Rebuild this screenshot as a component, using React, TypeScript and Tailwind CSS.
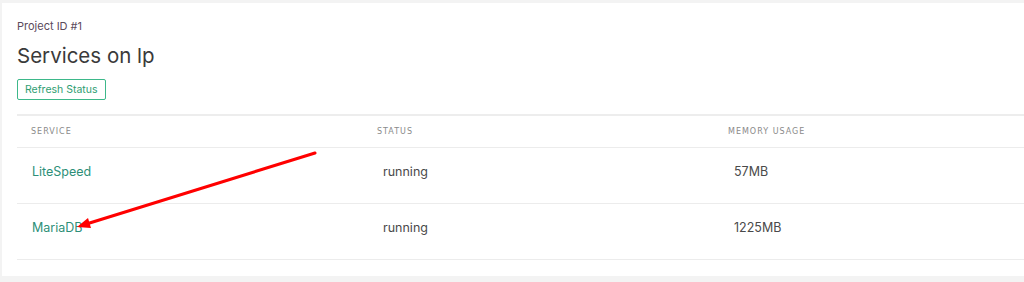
const rows = [
  { name: "LiteSpeed", status: "running", memory: "57MB" },
  { name: "MariaDB", status: "running", memory: "1225MB" },
];

export default function App() {
  return (
    <div className="h-[282px] w-[1024px] overflow-hidden bg-[#f3f3f3] pl-[2px] pt-[3px] font-['Inter',sans-serif]">
      <div className="relative h-[273px] bg-white pl-[15px] pt-[16px]">
        <div className="text-[11px] leading-[14px] text-[#5b4a5b]">Project ID #1</div>
        <h1 className="mt-[9px] text-[20.5px] leading-[28px] text-[#3a3a3a]">Services on lp</h1>
        <button className="mt-[9px] h-[21px] rounded-[2px] border border-[#3db88a] px-[7px] text-[10.5px] leading-[17px] text-[#2f9e72]">
          Refresh Status
        </button>

        <div className="mt-[14px] border-t-2 border-[#ededed]">
          <div className="grid h-[32px] grid-cols-[346px_351px_1fr] items-center border-b border-[#ececec] text-[8px] tracking-[1px] text-[#8a8a8a] uppercase font-['DejaVu_Sans',sans-serif]">
            <div className="pl-[14px]">Service</div>
            <div className="pl-[14px]">Status</div>
            <div className="pl-[14px]">Memory Usage</div>
          </div>
          {rows.map((r) => (
            <div
              key={r.name}
              className="grid h-[56px] grid-cols-[346px_351px_1fr] border-b border-[#ececec] pt-[16px] text-[12.5px] leading-[16px]"
            >
              <div className="pl-[15px] text-[#2d8f78]">{r.name}</div>
              <div className="pl-[20px] text-[#4a4a4a]">{r.status}</div>
              <div className="pl-[20px] text-[#4a4a4a]">{r.memory}</div>
            </div>
          ))}
        </div>

        <svg
          className="pointer-events-none absolute left-0 top-0"
          width="1022"
          height="273"
          viewBox="0 0 1022 273"
        >
          <line x1="313" y1="150" x2="86" y2="220.5" stroke="#ff0000" strokeWidth="3" strokeLinecap="round" />
          <polygon points="75,224 89,225 86,215" fill="#ff0000" />
        </svg>
      </div>
    </div>
  );
}
